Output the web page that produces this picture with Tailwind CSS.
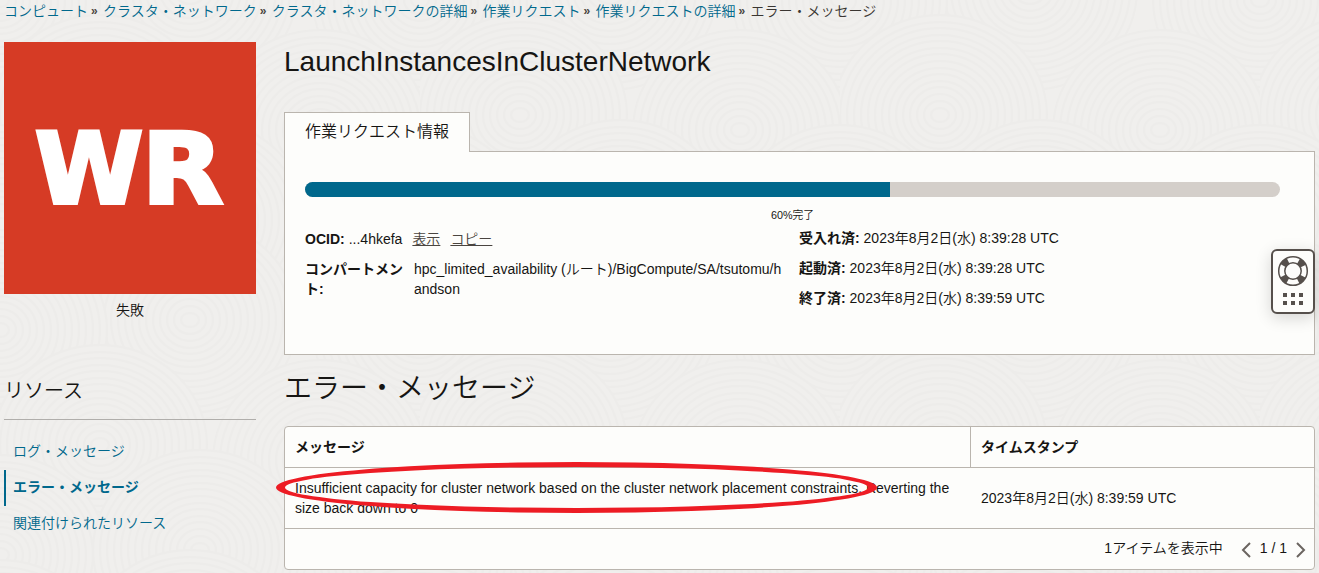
<!DOCTYPE html>
<html lang="ja">
<head>
<meta charset="utf-8">
<title>LaunchInstancesInClusterNetwork</title>
<script src="https://cdn.jsdelivr.net/npm/@tailwindcss/browser@4"></script>
</head>
<body class="relative h-[573px] w-[1319px] overflow-hidden bg-[#f0efed] font-['Liberation_Sans','Noto_Sans_CJK_JP',sans-serif] text-sm leading-5 font-[350] text-[#161513]">
<!-- page texture: overlapping tree-ring swirls -->
<svg class="absolute inset-0 -z-10" width="1319" height="573" aria-hidden="true">
  <defs>
    <g id="rings" fill="#f0efed" stroke="#edecea" stroke-width="2">
      <ellipse rx="107" ry="100"/><ellipse rx="100" ry="93"/><ellipse rx="93" ry="87"/><ellipse rx="86" ry="80"/><ellipse rx="79" ry="74"/><ellipse rx="72" ry="67"/><ellipse rx="65" ry="61"/><ellipse rx="58" ry="54"/><ellipse rx="51" ry="47"/><ellipse rx="44" ry="41"/><ellipse rx="37" ry="34"/><ellipse rx="30" ry="28"/><ellipse rx="23" ry="21"/><ellipse rx="16" ry="14"/><ellipse rx="9" ry="7"/>
    </g>
    <pattern id="swirl" width="420" height="330" patternUnits="userSpaceOnUse">
      <use href="#rings" x="190" y="-10"/><use href="#rings" x="0" y="0"/><use href="#rings" x="420" y="0"/>
      <use href="#rings" x="320" y="130"/><use href="#rings" x="100" y="115"/>
      <use href="#rings" x="0" y="225"/><use href="#rings" x="420" y="225"/><use href="#rings" x="200" y="220"/>
      <use href="#rings" x="190" y="320"/><use href="#rings" x="0" y="330"/><use href="#rings" x="420" y="330"/>
    </pattern>
  </defs>
  <rect width="1319" height="573" fill="url(#swirl)"/>
</svg>

<nav class="flex h-[22px] items-center pl-1 whitespace-nowrap text-[#00688c]">
  <a>コンピュート</a><span class="w-[15px] pl-[3px] text-xs font-bold text-[#4a4540]">»</span>
  <a>クラスタ・ネットワーク</a><span class="w-[15px] pl-[3px] text-xs font-bold text-[#4a4540]">»</span>
  <a>クラスタ・ネットワークの詳細</a><span class="w-[15px] pl-[3px] text-xs font-bold text-[#4a4540]">»</span>
  <a>作業リクエスト</a><span class="w-[15px] pl-[3px] text-xs font-bold text-[#4a4540]">»</span>
  <a>作業リクエストの詳細</a><span class="w-[15px] pl-[3px] text-xs font-bold text-[#4a4540]">»</span>
  <span class="text-[#3a3632]">エラー・メッセージ</span>
</nav>

<div class="flex pl-1">
  <aside class="w-[252px] shrink-0 pt-5">
    <svg class="block" width="252" height="252" viewBox="0 0 252 252">
      <rect width="252" height="252" fill="#d63b25"/>
      <g fill="#fff" stroke="#fff" stroke-width="4" font-family="DejaVu Sans" font-weight="700" font-size="98.8">
        <text x="31" y="161" textLength="108" lengthAdjust="spacingAndGlyphs">W</text>
        <text x="138" y="161" textLength="81" lengthAdjust="spacingAndGlyphs">R</text>
      </g>
    </svg>
    <p class="pt-1.5 text-center">失敗</p>
    <h2 class="mt-[55px] border-b border-[#b0aeab] pt-0.5 pb-[14px] text-xl leading-7 font-[350]">リソース</h2>
    <ul class="mt-[14px] text-[#00688c]">
      <li class="flex h-9 items-center pb-0.5 pl-[9px]">ログ・メッセージ</li>
      <li class="flex h-9 items-center border-l-2 border-[#00688c] pb-0.5 pl-[7px] font-bold">エラー・メッセージ</li>
      <li class="flex h-9 items-center pb-0.5 pl-[9px]">関連付けられたリソース</li>
    </ul>
  </aside>

  <main class="ml-7 w-[1031px] shrink-0">
    <h1 class="h-[90px] pt-[21px] text-[28px] leading-[38px] font-[350]">LaunchInstancesInClusterNetwork</h1>
    <div class="relative z-10 -mb-px flex h-10 w-[186px] items-center border border-b-0 border-[#bab5ae] bg-[#fdfdfb] pb-0.5 pl-5 text-base">作業リクエスト情報</div>
    <section class="h-[204px] border border-[#bab5ae] bg-[#fdfdfb] pt-[30px] pl-5">
      <div class="h-[15px] w-[975px] overflow-hidden rounded-full bg-[#d4cfca]">
        <div class="h-full w-3/5 bg-[#00688c]"></div>
      </div>
      <div class="mt-2 w-[975px] text-center text-[10.8px] leading-5">60%完了</div>
      <div class="flex">
        <div class="w-[494px] pt-1">
          <div class="flex h-5"><b class="font-bold">OCID:</b><span class="ml-1">...4hkefa</span><a class="ml-[10px] text-[#4a4540] underline">表示</a><a class="ml-[10px] text-[#4a4540] underline">コピー</a></div>
          <div class="mt-[10px] flex"><b class="w-[109px] shrink-0 pr-[10px] font-bold break-all">コンパートメント:</b><span class="w-[370px] break-all">hpc_limited_availability (ルート)/BigCompute/SA/tsutomu/handson</span></div>
        </div>
        <div class="flex flex-col gap-[10px] pt-[3px] whitespace-nowrap">
          <div><b class="font-bold">受入れ済:</b> 2023年8月2日(水) 8:39:28 UTC</div>
          <div><b class="font-bold">起動済:</b> 2023年8月2日(水) 8:39:28 UTC</div>
          <div><b class="font-bold">終了済:</b> 2023年8月2日(水) 8:39:59 UTC</div>
        </div>
      </div>
    </section>
    <h2 class="flex h-[71px] items-start pt-[15px] text-[28px] leading-[38px] font-[350]">エラー・メッセージ</h2>
    <div class="h-36 rounded-sm border border-[#bab5ae] bg-[#fdfdfb]">
      <div class="flex h-[41px] border-b border-[#bab5ae] font-bold">
        <div class="flex w-[686px] items-center border-r border-[#bab5ae] pl-[10px]">メッセージ</div>
        <div class="flex items-center pl-[10px]">タイムスタンプ</div>
      </div>
      <div class="flex h-[61px] items-center border-b border-[#bab5ae]">
        <div class="w-[686px] pr-5 pl-[10px]">Insufficient capacity for cluster network based on the cluster network placement constraints. Reverting the size back down to 0</div>
        <div class="pl-[10px]">2023年8月2日(水) 8:39:59 UTC</div>
      </div>
      <div class="flex h-[38px] items-center justify-end pr-2">
        <span>1アイテムを表示中</span>
        <svg class="mt-[3px] ml-[18px]" width="10" height="16" viewBox="0 0 10 16" fill="none" stroke="#6b6560" stroke-width="2"><path d="M9 1 2 8l7 7"/></svg>
        <span class="mx-[9px]">1 / 1</span>
        <svg class="mt-[3px]" width="10" height="16" viewBox="0 0 10 16" fill="none" stroke="#6b6560" stroke-width="2"><path d="m1 1 7 7-7 7"/></svg>
      </div>
    </div>
  </main>
</div>

<!-- support widget -->
<div class="absolute top-[249px] left-[1271px] z-20 h-[65px] w-11 rounded-md border-2 border-[#56504c] bg-[#fdfdfb] shadow-[0_4px_16px_rgba(0,0,0,0.16)]">
  <svg class="block" width="40" height="61" viewBox="0 0 40 61">
    <g fill="none" stroke="#56504c" transform="translate(20 20)">
      <circle r="11.2" stroke-width="6.5" stroke-dasharray="6.8 10.793" stroke-dashoffset="-5.4"/>
      <circle r="14.3" stroke-width="1.5"/>
      <circle r="8.2" stroke-width="1.5"/>
    </g>
    <path fill="#56504c" d="M10 42h4v4h-4zM18 42h4v4h-4zM26 42h4v4h-4zM10 50h4v4h-4zM18 50h4v4h-4zM26 50h4v4h-4z"/>
  </svg>
</div>

<!-- hand-drawn highlight around the message -->
<svg class="absolute top-[462px] left-[276px] z-20" width="601" height="51" viewBox="0 0 601 51">
  <path fill="#ed1c24" fill-rule="evenodd" d="M0 25.5a300.5 25.5 0 0 1 601 0a300.5 25.5 0 0 1-601 0zM9 25.5a291.5 20.5 0 0 0 583 0a291.5 20.5 0 0 0-583 0z"/>
</svg>
</body>
</html>
